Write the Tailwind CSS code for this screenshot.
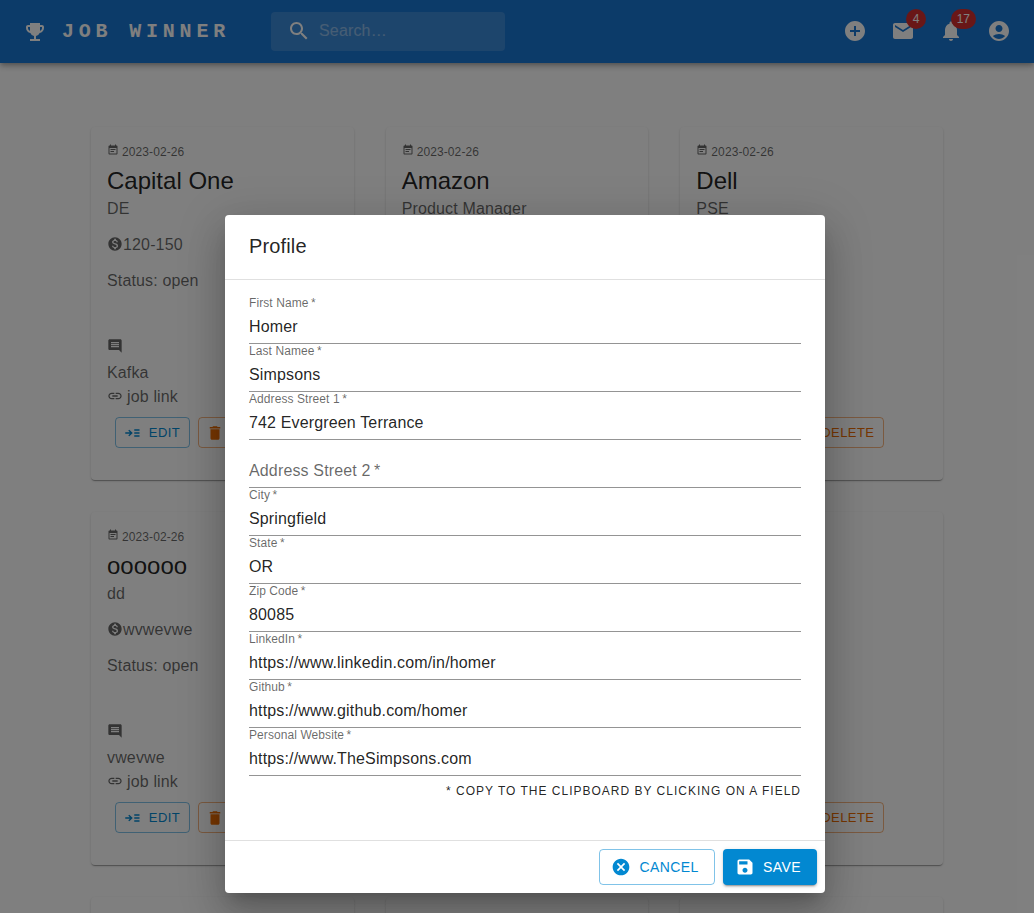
<!DOCTYPE html>
<html lang="en">

<head>
    <meta charset="UTF-8">
    <title>Job Winner</title>
    <script src="https://cdn.jsdelivr.net/npm/@tailwindcss/browser@4"></script>
</head>

<body class="bg-white font-['Liberation_Sans',Arial,sans-serif] text-black/87">
    <div class="relative h-[913px] w-[1034px] overflow-hidden">
        <!-- App bar -->
        <header class="flex h-[63px] items-center bg-[#1976d2] pl-6 pr-[23px] text-white shadow-[0_2px_4px_-1px_rgba(0,0,0,0.2),0_4px_5px_0_rgba(0,0,0,0.14),0_1px_10px_0_rgba(0,0,0,0.12)]">
            <svg class="mr-[15px] -ml-px h-6 w-6 fill-current" viewBox="0 0 24 24"><path d="M19 5h-2V3H7v2H5c-1.1 0-2 .9-2 2v1c0 2.55 1.92 4.63 4.39 4.94.63 1.5 1.98 2.63 3.61 2.96V19H7v2h10v-2h-4v-3.1c1.63-.33 2.98-1.46 3.61-2.96C19.08 12.63 21 10.55 21 8V7c0-1.1-.9-2-2-2zM5 8V7h2v3.82C5.84 10.4 5 9.3 5 8zm14 0c0 1.3-.84 2.4-2 2.82V7h2v1z"/></svg>
            <span class="font-['Liberation_Mono',monospace] text-xl font-bold tracking-[0.3rem]">JOB WINNER</span>
            <div class="ml-[41px] flex h-[39px] w-[234px] items-center rounded bg-white/15 pl-4">
                <svg class="-mt-px h-6 w-6 fill-current" viewBox="0 0 24 24"><path d="M15.5 14h-.79l-.28-.27C15.41 12.59 16 11.11 16 9.5 16 5.91 13.09 3 9.5 3S3 5.91 3 9.5 5.91 16 9.5 16c1.61 0 3.09-.59 4.23-1.57l.27.28v.79l5 4.99L20.49 19l-4.99-5zm-6 0C7.01 14 5 11.99 5 9.5S7.01 5 9.5 5 14 7.01 14 9.5 11.99 14 9.5 14z"/></svg>
                <span class="-mt-px ml-2 text-base tracking-[0.15px] text-white/42">Search…</span>
            </div>
            <div class="-mt-px ml-auto flex items-center gap-6">
                <svg class="h-6 w-6 fill-current" viewBox="0 0 24 24"><path d="M12 2C6.48 2 2 6.48 2 12s4.48 10 10 10 10-4.48 10-10S17.52 2 12 2zm5 11h-4v4h-2v-4H7v-2h4V7h2v4h4v2z"/></svg>
                <div class="relative">
                    <svg class="h-6 w-6 fill-current" viewBox="0 0 24 24"><path d="M20 4H4c-1.1 0-1.99.9-1.99 2L2 18c0 1.1.9 2 2 2h16c1.1 0 2-.9 2-2V6c0-1.1-.9-2-2-2zm0 4l-8 5-8-5V6l8 5 8-5v2z"/></svg>
                    <span class="absolute -right-[11px] -top-[10px] flex h-5 min-w-5 items-center justify-center rounded-full bg-[#d32f2f] px-[6px] text-xs">4</span>
                </div>
                <div class="relative">
                    <svg class="h-6 w-6 fill-current" viewBox="0 0 24 24"><path d="M12 22c1.1 0 2-.9 2-2h-4c0 1.1.89 2 2 2zm6-6v-5c0-3.07-1.64-5.64-4.5-6.32V4c0-.83-.67-1.5-1.5-1.5s-1.5.67-1.5 1.5v.68C7.63 5.36 6 7.92 6 11v5l-2 2v1h16v-1l-2-2z"/></svg>
                    <span class="absolute -right-[13px] -top-[10px] flex h-5 min-w-5 items-center justify-center rounded-full bg-[#d32f2f] px-[6px] text-xs">17</span>
                </div>
                <svg class="h-6 w-6 fill-current" viewBox="0 0 24 24"><path d="M12 2C6.48 2 2 6.48 2 12s4.48 10 10 10 10-4.48 10-10S17.52 2 12 2zm0 4c1.93 0 3.5 1.57 3.5 3.5S13.93 13 12 13s-3.5-1.57-3.5-3.5S10.07 6 12 6zm0 14c-2.03 0-4.43-.82-6.14-2.88C7.55 15.8 9.68 15 12 15s4.45.8 6.14 2.12C16.43 19.18 14.03 20 12 20z"/></svg>
            </div>
        </header>

        <!-- Job cards -->
        <main id="cards" class="ml-[91px] mt-16 grid w-[852px] grid-cols-3 gap-x-[32px] gap-y-[32px]"></main>

        <!-- Backdrop -->
        <div class="absolute inset-0 bg-black/50"></div>

        <!-- Profile dialog -->
        <section class="absolute left-[225px] top-[215px] flex h-[678px] w-[600px] flex-col rounded bg-white shadow-[0_11px_15px_-7px_rgba(0,0,0,0.2),0_24px_38px_3px_rgba(0,0,0,0.14),0_9px_46px_8px_rgba(0,0,0,0.12)]">
            <h2 class="flex h-[64px] items-center px-6 pb-[2px] text-xl leading-[32px] tracking-[0.15px]">Profile</h2>
            <div class="h-px bg-[#e0e0e0]"></div>
            <div id="fields" class="flex-1 px-6 pt-[16px]"></div>
            <div class="flex h-[53px] items-center justify-end gap-2 border-t border-[#e0e0e0] pr-2">
                <button class="flex h-9 w-[116px] items-center justify-center gap-2 rounded border border-[#0288d1]/50 pr-1 text-sm font-normal tracking-[0.4px] text-[#0288d1]">
                    <svg class="h-5 w-5 fill-current" viewBox="0 0 24 24"><path d="M12 2C6.47 2 2 6.47 2 12s4.47 10 10 10 10-4.47 10-10S17.53 2 12 2zm5 13.59L15.59 17 12 13.41 8.41 17 7 15.59 10.59 12 7 8.41 8.41 7 12 10.59 15.59 7 17 8.41 13.41 12 17 15.59z"/></svg>
                    CANCEL
                </button>
                <button class="flex h-9 w-[94px] items-center justify-center gap-2 rounded bg-[#0288d1] pr-1 text-sm font-normal tracking-[0.4px] text-white shadow-[0_3px_1px_-2px_rgba(0,0,0,0.2),0_2px_2px_0_rgba(0,0,0,0.14),0_1px_5px_0_rgba(0,0,0,0.12)]">
                    <svg class="h-5 w-5 fill-current" viewBox="0 0 24 24"><path d="M17 3H5c-1.11 0-2 .9-2 2v14c0 1.1.89 2 2 2h14c1.1 0 2-.9 2-2V7l-4-4zm-5 16c-1.66 0-3-1.34-3-3s1.34-3 3-3 3 1.34 3 3-1.34 3-3 3zm3-10H5V5h10v4z"/></svg>
                    SAVE
                </button>
            </div>
        </section>
    </div>

    <script>
        const jobs = [
            { company: "Capital One", role: "DE", pay: "120-150", tags: "Kafka" },
            { company: "Amazon", role: "Product Manager", pay: "120-150", tags: "Kafka" },
            { company: "Dell", role: "PSE", pay: "120-150", tags: "Kafka" },
            { company: "oooooo", role: "dd", pay: "wvwevwe", tags: "vwevwe" },
            { company: "Amazon", role: "Product Manager", pay: "120-150", tags: "Kafka" },
            { company: "Dell", role: "PSE", pay: "120-150", tags: "Kafka" },
            { company: "Amazon", role: "PSE", pay: "120-150", tags: "Kafka" },
            { company: "Amazon", role: "PSE", pay: "120-150", tags: "Kafka" },
            { company: "Amazon", role: "PSE", pay: "120-150", tags: "Kafka" },
        ];

        document.getElementById("cards").innerHTML = jobs.map(job => `
            <article class="h-[353px] rounded bg-white px-4 pt-4 tracking-[0.15px] shadow-[0_2px_1px_-1px_rgba(0,0,0,0.2),0_1px_1px_0_rgba(0,0,0,0.14),0_1px_3px_0_rgba(0,0,0,0.12)]">
                <div class="flex h-[16px] items-center gap-[3px] pt-px text-xs tracking-[0.1px] text-black/60">
                    <svg class="-mt-[3px] h-3 w-3 fill-current" viewBox="0 0 24 24"><path d="M17 10H7v2h10v-2zm2-7h-1V1h-2v2H8V1H6v2H5c-1.11 0-1.99.9-1.99 2L3 19c0 1.1.89 2 2 2h14c1.1 0 2-.9 2-2V5c0-1.1-.9-2-2-2zm0 16H5V8h14v11zm-5-5H7v2h7v-2z"/></svg>
                    2023-02-26
                </div>
                <h3 class="mt-[6px] text-2xl leading-8 tracking-normal">${job.company}</h3>
                <p class="text-base leading-6 text-black/60">${job.role}</p>
                <p class="mt-3 flex h-6 items-center text-base text-black/60"><svg class="-mt-[3px] h-4 w-4 fill-current" viewBox="0 0 24 24"><path d="M12 2C6.48 2 2 6.48 2 12s4.48 10 10 10 10-4.48 10-10S17.52 2 12 2zm1.41 16.09V20h-2.67v-1.93c-1.71-.36-3.16-1.46-3.27-3.4h1.96c.1 1.05.82 1.87 2.65 1.87 1.96 0 2.4-.98 2.4-1.59 0-.83-.44-1.61-2.67-2.14-2.48-.6-4.18-1.62-4.18-3.67 0-1.72 1.39-2.84 3.11-3.21V4h2.67v1.95c1.86.45 2.79 1.86 2.85 3.39H14.3c-.05-1.11-.64-1.87-2.22-1.87-1.5 0-2.4.68-2.4 1.64 0 .84.65 1.39 2.67 1.91s4.18 1.39 4.18 3.91c-.01 1.83-1.38 2.83-3.12 3.16z"/></svg>${job.pay}</p>
                <p class="mt-3 h-6 text-base leading-6 text-black/60">Status: open</p>
                <svg class="mt-[45px] h-4 w-4 fill-black/60" viewBox="0 0 24 24"><path d="M21.99 4c0-1.1-.89-2-1.99-2H4c-1.1 0-2 .9-2 2v12c0 1.1.9 2 2 2h14l4 4-.01-18zM18 14H6v-2h12v2zm0-3H6V9h12v2zm0-3H6V6h12v2z"/></svg>
                <p class="mt-[7px] text-base leading-6 text-black/60">${job.tags}</p>
                <p class="flex h-6 items-center gap-1 text-base text-black/60"><svg class="-mt-[3px] h-4 w-4 fill-current" viewBox="0 0 24 24"><path d="M3.9 12c0-1.71 1.39-3.1 3.1-3.1h4V7H7c-2.76 0-5 2.24-5 5s2.24 5 5 5h4v-1.9H7c-1.71 0-3.1-1.39-3.1-3.1zM8 13h8v-2H8v2zm9-6h-4v1.9h4c1.71 0 3.1 1.39 3.1 3.1s-1.39 3.1-3.1 3.1h-4V17h4c2.76 0 5-2.24 5-5s-2.24-5-5-5z"/></svg>job link</p>
                <div class="ml-2 mt-2 flex gap-2">
                    <button class="flex h-[31px] w-[75px] items-center justify-center gap-2 rounded border border-[#0288d1]/50 pr-[2px] text-[13px] tracking-[0.46px] text-[#0288d1]">
                        <svg class="h-[18px] w-[18px] fill-current" viewBox="0 0 24 24"><path d="M3 11h6.2L7 8.8 8.4 7.6 13 12l-4.6 4.4L7 15.2 9.2 13H3v-2zm12-4h7v2h-7V7zm0 4h7v2h-7v-2zm0 4h7v2h-7v-2z"/></svg>
                        EDIT
                    </button>
                    <button class="flex h-[31px] w-[97px] items-center justify-center gap-2 rounded border border-[#ed6c02]/50 pr-[2px] text-[13px] tracking-[0.46px] text-[#ed6c02]">
                        <svg class="h-[18px] w-[18px] fill-current" viewBox="0 0 24 24"><path d="M6 19c0 1.1.9 2 2 2h8c1.1 0 2-.9 2-2V7H6v12zM19 4h-3.5l-1-1h-5l-1 1H5v2h14V4z"/></svg>
                        DELETE
                    </button>
                </div>
            </article>
        `).join("");

        const fields = [
            ["First Name", "Homer"],
            ["Last Namee", "Simpsons"],
            ["Address Street 1", "742 Evergreen Terrance"],
            ["Address Street 2", ""],
            ["City", "Springfield"],
            ["State", "OR"],
            ["Zip Code", "80085"],
            ["LinkedIn", "https://www.linkedin.com/in/homer"],
            ["Github", "https://www.github.com/homer"],
            ["Personal Website", "https://www.TheSimpsons.com"],
        ];

        document.getElementById("fields").innerHTML = fields.map(([label, value]) => value ? `
            <div class="h-12 border-b border-black/42">
                <div class="h-[21px] text-xs leading-[14px] tracking-[0.08px] text-black/60">${label}&thinsp;*</div>
                <div class="text-base leading-[19px] tracking-[0.15px]">${value}</div>
            </div>
        ` : `
            <div class="flex h-12 items-end border-b border-black/42 pb-[7px] text-base leading-[19px] tracking-[0.15px] text-black/60">${label}&thinsp;*</div>
        `).join("") + `
            <p class="mt-[7px] text-right text-xs leading-[16px] tracking-[1px] text-black/87">* COPY TO THE CLIPBOARD BY CLICKING ON A FIELD</p>
        `;
    </script>
</body>

</html>
